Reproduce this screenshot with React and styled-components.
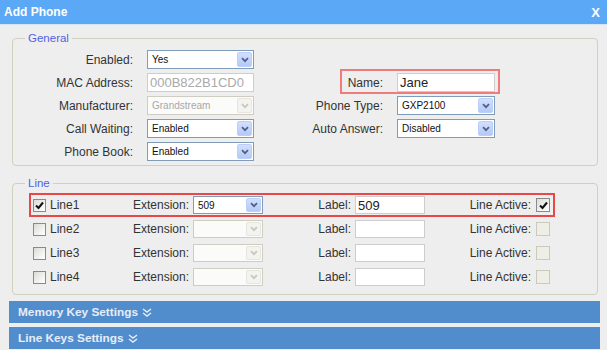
import React from 'react';
import styled, { createGlobalStyle } from 'styled-components';

const GlobalStyle = createGlobalStyle`
  html, body { margin: 0; padding: 0; }
  body {
    background: #eeeeee;
    font-family: "Liberation Sans", Arial, sans-serif;
    color: #333;
  }
`;

const Dialog = styled.div`
  width: 607px;
  height: 350px;
  overflow: hidden;
  background: #eeeeee;
`;

const TitleBar = styled.div`
  height: 24px;
  background: #5ba9f6;
  border-bottom: 1px solid #d5e4f2;
  display: flex;
  align-items: center;
  justify-content: space-between;
  padding: 0 7px 0 4px;
  color: #fff;
  font-weight: bold;
  font-size: 12px;
`;

const Close = styled.span`
  font-size: 13px;
`;

const Group = styled.fieldset`
  margin: ${p => p.$top}px 9px 0 12px;
  padding: 5px 0 ${p => p.$bottom}px 0;
  border: 1px solid #d0d0bf;
  border-radius: 4px;
  min-width: 0;
`;

const Legend = styled.legend`
  margin-left: 12px;
  padding: 0 3px;
  font-size: 11.5px;
  line-height: 14px;
  color: #5261e2;
`;

const GeneralGrid = styled.div`
  display: grid;
  grid-template-columns: 120px 107px 115px 98px;
  grid-auto-rows: 19px;
  column-gap: 14px;
  row-gap: 4px;
  align-items: center;
`;

const Label = styled.label`
  font-size: 12px;
  color: #333;
  text-align: ${p => (p.$left ? 'left' : 'right')};
  padding-right: ${p => p.$pad || 0}px;
  white-space: nowrap;
`;

const HighlightPair = styled.div`
  grid-column: 3 / span 2;
  display: grid;
  grid-template-columns: 115px 98px;
  column-gap: 14px;
  align-items: center;
  position: relative;
  &::after {
    content: '';
    position: absolute;
    left: 72px;
    right: -5px;
    top: -4px;
    bottom: -2px;
    border: 2px solid #ef7b7b;
    pointer-events: none;
  }
`;

const SelectBox = styled.div`
  box-sizing: border-box;
  height: ${p => p.$h || 19}px;
  width: 100%;
  display: flex;
  align-items: stretch;
  padding: 1px;
  background: ${p => (p.$disabled ? '#fbfbf9' : '#fff')};
  border: 1px solid ${p => (p.$disabled ? '#cfcdc2' : '#7f9db9')};
`;

const SelectText = styled.span`
  flex: 1;
  display: flex;
  align-items: center;
  padding-left: 3px;
  font-size: 10px;
  color: ${p => (p.$disabled ? '#a8a8a8' : '#111')};
`;

const SelectButton = styled.span`
  width: 15px;
  box-sizing: border-box;
  display: flex;
  align-items: center;
  justify-content: center;
  border-radius: 2px;
  border: 1px solid ${p => (p.$disabled ? '#e6e5de' : '#bccffa')};
  background: ${p =>
    p.$disabled
      ? '#f3f3ef'
      : 'linear-gradient(#d2dffd, #b5c9f7)'};
`;

const Select = ({ value, disabled, height }) => (
  <SelectBox $disabled={disabled} $h={height}>
    <SelectText $disabled={disabled}>{value}</SelectText>
    <SelectButton $disabled={disabled}>
      <svg width="8" height="6" viewBox="0 0 8 6">
        <path
          d="M1 1.2 L4 4.2 L7 1.2"
          fill="none"
          stroke={disabled ? '#c8c7bd' : '#4d6185'}
          strokeWidth="1.7"
        />
      </svg>
    </SelectButton>
  </SelectBox>
);

const TextInput = styled.div`
  box-sizing: border-box;
  height: ${p => p.$h || 19}px;
  width: 100%;
  background: #fff;
  border: 1px solid #cdcdcd;
  padding-left: 2px;
  display: flex;
  align-items: center;
  font-size: 13px;
  color: ${p => (p.$muted ? '#a9a9a9' : '#222')};
`;

const LineRows = styled.div`
  margin-left: 18px;
  display: grid;
  justify-content: start;
  grid-auto-rows: 20px;
  row-gap: 4px;
`;

const LineRow = styled.div`
  display: grid;
  grid-template-columns: 19px 83px 60px 70px 92px 70px 111px 17px;
  align-items: center;
  position: relative;
  &::after {
    content: '';
    display: ${p => (p.$highlight ? 'block' : 'none')};
    position: absolute;
    inset: -2px;
    border: 2px solid #ea4848;
    pointer-events: none;
  }
`;

const Box = styled.span`
  box-sizing: border-box;
  width: ${p => p.$size}px;
  height: ${p => p.$size}px;
  margin-left: ${p => p.$ml || 0}px;
  display: flex;
  align-items: center;
  justify-content: center;
  border: 1px solid ${p => (p.$disabled ? '#cbc9bc' : '#8a8a8a')};
  background: ${p =>
    p.$disabled ? '#efeee6' : 'linear-gradient(135deg, #dcdcd6, #ffffff)'};
`;

const Checkbox = ({ checked, disabled, size = 13, ml }) => (
  <Box $size={size} $disabled={disabled} $ml={ml}>
    {checked && (
      <svg width="9" height="9" viewBox="0 0 9 9">
        <path d="M1 4.5 L3.5 7 L8 1.5" fill="none" stroke="#111" strokeWidth="2" />
      </svg>
    )}
  </Box>
);

const SectionBar = styled.div`
  margin: ${p => p.$top}px 7px 0 9px;
  height: 22px;
  background: #518dcd;
  display: flex;
  align-items: center;
  gap: 4px;
  padding-left: 9px;
  color: #e6edf8;
  font-weight: bold;
  font-size: 11.8px;
`;

const DoubleChevron = () => (
  <svg width="10" height="9" viewBox="0 0 10 9">
    <path d="M1 1 L5 4 L9 1 M1 5 L5 8 L9 5" fill="none" stroke="#e6edf8" strokeWidth="1.4" />
  </svg>
);

const lines = [
  { name: 'Line1', ext: '509', label: '509', on: true },
  { name: 'Line2' },
  { name: 'Line3' },
  { name: 'Line4' },
];

export default function App() {
  return (
    <Dialog>
      <GlobalStyle />
      <TitleBar>
        <span>Add Phone</span>
        <Close>X</Close>
      </TitleBar>

      <Group $top={6} $bottom={4}>
        <Legend>General</Legend>
        <GeneralGrid>
          <Label>Enabled:</Label>
          <Select value="Yes" />
          <span />
          <span />

          <Label>MAC Address:</Label>
          <TextInput $muted>000B822B1CD0</TextInput>
          <HighlightPair>
            <Label>Name:</Label>
            <TextInput>Jane</TextInput>
          </HighlightPair>

          <Label>Manufacturer:</Label>
          <Select value="Grandstream" disabled />
          <Label>Phone Type:</Label>
          <Select value="GXP2100" />

          <Label>Call Waiting:</Label>
          <Select value="Enabled" />
          <Label>Auto Answer:</Label>
          <Select value="Disabled" />

          <Label>Phone Book:</Label>
          <Select value="Enabled" />
        </GeneralGrid>
      </Group>

      <Group $top={10} $bottom={7}>
        <Legend>Line</Legend>
        <LineRows>
          {lines.map(l => (
            <LineRow key={l.name} $highlight={l.on}>
              <Checkbox checked={l.on} ml={2} />
              <Label $left>{l.name}</Label>
              <Label $left>Extension:</Label>
              <Select value={l.ext || ''} disabled={!l.on} height={18} />
              <Label $pad={4}>Label:</Label>
              <TextInput $h={18}>{l.label || ''}</TextInput>
              <Label $pad={5}>Line Active:</Label>
              <Checkbox checked={l.on} disabled={!l.on} size={14} />
            </LineRow>
          ))}
        </LineRows>
      </Group>

      <SectionBar $top={6}>
        Memory Key Settings <DoubleChevron />
      </SectionBar>
      <SectionBar $top={4}>
        Line Keys Settings <DoubleChevron />
      </SectionBar>
    </Dialog>
  );
}
